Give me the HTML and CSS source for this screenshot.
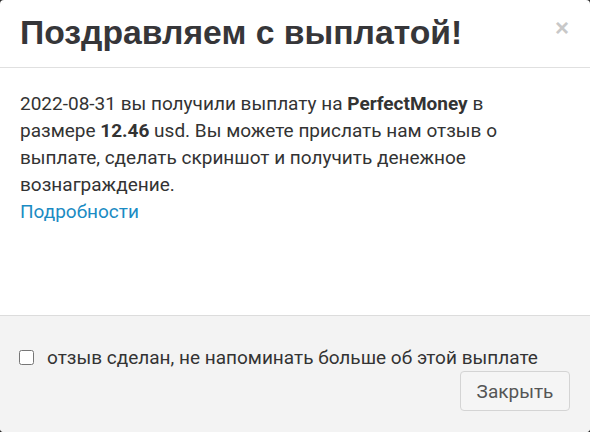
FILE: index.html
```html
<!DOCTYPE html>
<html lang="ru">
<head>
    <meta charset="UTF-8">
    <meta name="viewport" content="width=device-width, initial-scale=1.0">
    <title>Поздравляем с выплатой!</title>
    <link rel="stylesheet" href="styles.css">
</head>
<body>

<div class="modal">
    <div class="modal-header">
        <h1 class="modal-title">Поздравляем с выплатой!</h1>
        <button class="close-btn" type="button">&times;</button>
    </div>

    <div class="modal-body">
        <p>2022-08-31 вы получили выплату на <b>PerfectMoney</b> в размере <b>12.46</b> usd. Вы можете прислать нам отзыв о выплате, сделать скриншот и получить денежное вознаграждение.</p>
        <a href="#" class="more-link">Подробности</a>
    </div>

    <div class="modal-footer">
        <label class="remind-check">
            <input type="checkbox">
            <span>отзыв сделан, не напоминать больше об этой выплате</span>
        </label>
        <div class="footer-actions">
            <button class="close-footer-btn" type="button">Закрыть</button>
        </div>
    </div>
</div>

</body>
</html>
```

FILE: styles.css
```css
body {
    margin: 0;
    padding: 0;
    background: #2b2b2b;
    font-family: 'Roboto', 'Liberation Sans', sans-serif;
    color: #333;
}

.modal {
    background-color: #fff;
    border-radius: 4px;
    overflow: hidden;
    width: 590px;
    height: 432px;
    display: flex;
    flex-direction: column;
}

.modal-header {
    display: flex;
    align-items: flex-start;
    justify-content: space-between;
    padding: 12px 20px 0 20px;
    height: 55px;
    border-bottom: 1px solid #e0e0e0;
}

.modal-title {
    margin: 0;
    font-family: 'Liberation Sans', Arial, sans-serif;
    font-size: 33.7px;
    font-weight: bold;
    line-height: 40px;
    color: #363639;
}

.close-btn {
    background: none;
    border: none;
    padding: 0;
    margin-top: 4px;
    margin-right: 1px;
    font-family: 'Liberation Sans', Arial, sans-serif;
    font-size: 24px;
    font-weight: bold;
    line-height: 24px;
    color: #c8c8c8;
    cursor: pointer;
}

.modal-body {
    padding: 22px 50px 0 20px;
    height: 225px;
    font-size: 19px;
    line-height: 27px;
}

.modal-body p {
    margin: 0;
}

.modal-body b {
    font-weight: bold;
}

.more-link {
    color: #1b8bc3;
    text-decoration: none;
}

.modal-footer {
    flex: 1;
    background-color: #f3f3f3;
    border-top: 1px solid #dcdcdc;
    padding: 28px 20px 20px 20px;
}

.remind-check {
    display: flex;
    align-items: center;
    gap: 13px;
    font-size: 19px;
    line-height: 27px;
    color: #333;
}

.remind-check input {
    margin: 0 0 0 -1px;
    width: 15px;
    height: 15px;
}

.footer-actions {
    display: flex;
    justify-content: flex-end;
}

.close-footer-btn {
    background-color: #f5f5f5;
    color: #555;
    border: 1px solid #d4d4d4;
    border-radius: 4px;
    padding: 0;
    height: 40px;
    width: 110px;
    font-family: 'Roboto', 'Liberation Sans', sans-serif;
    font-size: 19px;
    cursor: pointer;
}
```
